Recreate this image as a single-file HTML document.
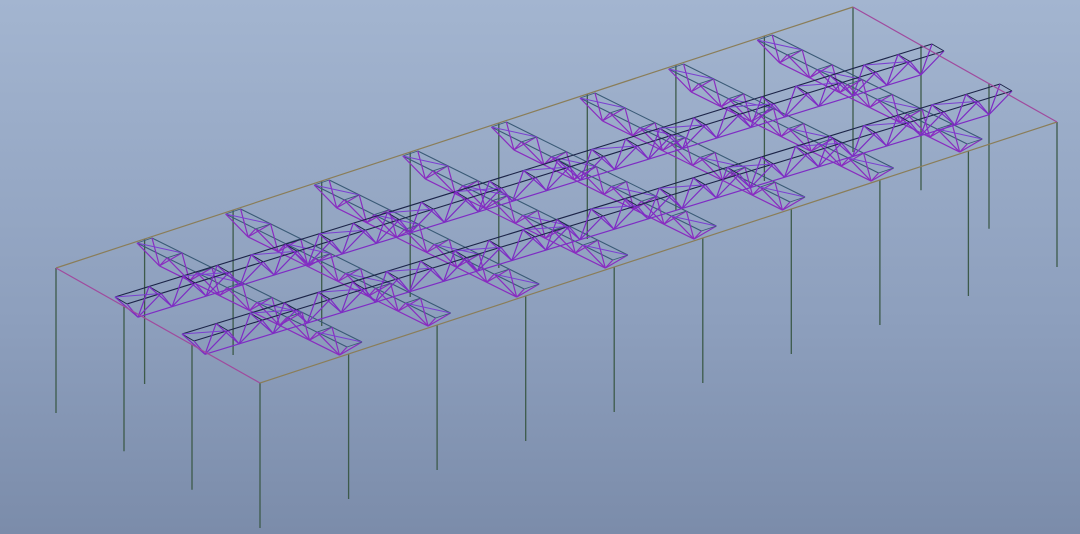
<!DOCTYPE html>
<html><head><meta charset="utf-8"><style>
html,body{margin:0;padding:0;width:1080px;height:534px;overflow:hidden}
body{background:linear-gradient(#a3b5d0,#8d9fbd 60%,#7b8caa)}
svg{position:absolute;left:0;top:0}
</style></head><body>
<svg id="s" width="1080" height="534" viewBox="0 0 1080 534"></svg>
<script>
var s=document.getElementById('s'),out='';
function L(a,b,c,w){out+='<line x1="'+a[0].toFixed(1)+'" y1="'+a[1].toFixed(1)+'" x2="'+b[0].toFixed(1)+'" y2="'+b[1].toFixed(1)+'" stroke="'+c+'" stroke-width="'+(w||1)+'"/>';}
var A=[56,268],B=[853,7],D=[260,383],C=[1057,122];
function P(u,v){return [A[0]+u*(B[0]-A[0])+v*(D[0]-A[0]),A[1]+u*(B[1]-A[1])+v*(D[1]-A[1])];}
var colC='#3d5a4a',H=145;
for(var k=0;k<=9;k++){var p=P(k/9,1);L(p,[p[0],p[1]+H],colC,1.3);var q=P(k/9,0);L(q,[q[0],q[1]+H],colC,1.3);}
[1/3,2/3].forEach(function(v){var p=P(0,v);L(p,[p[0],p[1]+H],colC,1.3);var q=P(1,v);L(q,[q[0],q[1]+H],colC,1.3);});
function truss(s0,e0,wv,h,n,chord,diag){
 var t1=s0,t2=[s0[0]+wv[0],s0[1]+wv[1]],dx=(e0[0]-s0[0])/n,dy=(e0[1]-s0[1])/n;
 var e2=[e0[0]+wv[0],e0[1]+wv[1]];
 var b0=[s0[0]+wv[0]/2+dx/2,s0[1]+wv[1]/2+dy/2+h],b1=[e0[0]+wv[0]/2-dx/2,e0[1]+wv[1]/2-dy/2+h];
 L(t1,e0,chord,1.1);L(t2,e2,chord,1.1);L(b0,b1,diag,1.2);
 for(var i=0;i<=n;i++){var a=[t1[0]+dx*i,t1[1]+dy*i],b=[t2[0]+dx*i,t2[1]+dy*i];
  L(a,b,chord,0.9);
  if(i<n){var m=[b0[0]+dx*i,b0[1]+dy*i];L(a,m,diag,1.2);L(b,m,diag,1.2);
   var a2=[a[0]+dx,a[1]+dy],b2=[b[0]+dx,b[1]+dy];L(a2,m,diag,1.2);L(b2,m,diag,1.2);
   if(i%2==0)L(a,b2,'#7a3fd0',1);}
 }
}
for(var k=1;k<=8;k++){var o=[88.6*(k-1),-29*(k-1)];
 truss([137+o[0],243+o[1]],[347+o[0],347+o[1]],[15,-5],18,7,'#3a5a76','#8a2cc0');}
truss([115,297],[932,44],[12,7],22,24,'#1c2448','#7e2cc4');
truss([182,334],[1000,84],[12,7],22,24,'#1c2448','#7e2cc4');
L(A,B,'#8a7d58',1.2);L(D,C,'#8a7d58',1.2);L(A,D,'#a04a9e',1.2);L(B,C,'#a04a9e',1.2);
s.innerHTML=out;
</script>
</body></html>
